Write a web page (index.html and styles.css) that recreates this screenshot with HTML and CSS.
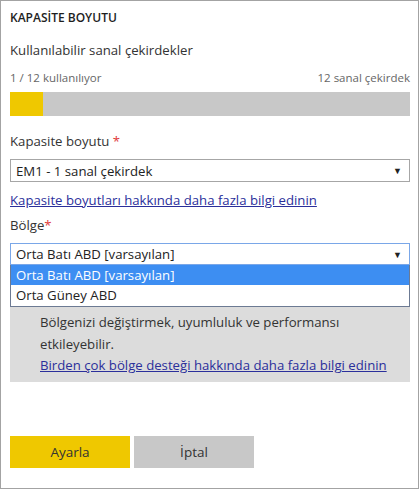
FILE: index.html
```html
<!DOCTYPE html>
<html lang="tr">
<head>
<meta charset="utf-8">
<link rel="stylesheet" href="styles.css">
</head>
<body>
<div class="panel">
  <h2 class="title">KAPASİTE BOYUTU</h2>
  <div class="subhead">Kullanılabilir sanal çekirdekler</div>
  <div class="usage">
    <span>1 / 12 kullanılıyor</span>
    <span>12 sanal çekirdek</span>
  </div>
  <div class="bar"><div class="bar-fill" style="width:33px"></div></div>

  <div class="label">Kapasite boyutu <span class="req">*</span></div>
  <div class="select">
    <span>EM1 - 1 sanal çekirdek</span>
    <span class="arrow">▼</span>
  </div>
  <a class="link first-link" href="#">Kapasite boyutları hakkında daha fazla bilgi edinin</a>

  <div class="label region-label">Bölge<span class="req">*</span></div>
  <div class="region-wrap">
    <div class="select select-open">
      <span>Orta Batı ABD [varsayılan]</span>
      <span class="arrow">▼</span>
    </div>
    <ul class="options">
      <li class="opt active">Orta Batı ABD [varsayılan]</li>
      <li class="opt">Orta Güney ABD</li>
    </ul>
    <div class="note">
      <p>Bölgenizi değiştirmek, uyumluluk ve performansı etkileyebilir.</p>
      <a class="link" href="#">Birden çok bölge desteği hakkında daha fazla bilgi edinin</a>
    </div>
  </div>

  <div class="buttons">
    <button class="btn btn-primary">Ayarla</button>
    <button class="btn btn-secondary">İptal</button>
  </div>
</div>
</body>
</html>
```

FILE: styles.css
```css
* { box-sizing: border-box; }
html, body { margin: 0; padding: 0; background: #fff; }
body {
  font-family: "Open Sans", "Noto Sans", sans-serif;
  color: #252525;
}
.panel {
  width: 419px;
  height: 489px;
  border: 1px solid #a3a3a3;
  padding: 0 8px 0 9px;
  display: flex;
  flex-direction: column;
}
.title {
  margin: 9px 0 0;
  font-size: 12px;
  font-weight: 600;
  line-height: 16px;
  color: #1e1e1e;
}
.subhead {
  margin-top: 14px;
  font-size: 13.2px;
  line-height: 20px;
  color: #333;
}
.usage {
  margin-top: 10px;
  display: flex;
  justify-content: space-between;
  font-size: 11.5px;
  line-height: 16px;
  color: #666;
}
.bar {
  margin-top: 6px;
  height: 24px;
  background: #c8c8c8;
}
.bar-fill {
  height: 100%;
  background: #efc800;
}
.label {
  margin-top: 15px;
  font-size: 13.2px;
  line-height: 20px;
  color: #333;
}
.req { color: #e03a3a; }
.select {
  margin-top: 8px;
  height: 23px;
  border: 1px solid #a6a6a6;
  display: flex;
  align-items: center;
  justify-content: space-between;
  padding: 0 7px 0 5px;
  font-size: 13.2px;
  color: #222;
  background: #fff;
}
.arrow { font-size: 9px; color: #222; }
.link {
  display: block;
  color: #2b2f9b;
  text-decoration: underline;
  font-size: 13.2px;
  line-height: 20px;
}
.first-link { margin-top: 8px; }
.region-label { margin-top: 5px; }
.region-wrap { position: relative; }
.select-open {
  margin-top: 8px;
  height: 22px;
  border-color: #7aa7e8;
}
.options {
  position: absolute;
  top: 30px;
  left: 0;
  right: 0;
  margin: 0;
  padding: 0;
  list-style: none;
  border: 1px solid #6c7a93;
  border-top: none;
  background: #fff;
  z-index: 2;
}
.opt {
  height: 20px;
  line-height: 20px;
  padding: 0 5px;
  font-size: 13.2px;
  color: #222;
}
.opt.active { background: #3d8ef2; color: #fff; }
.opt + .opt { height: 21px; }
.note {
  margin-top: 15px;
  background: #dcdcdc;
  padding: 31px 10px 7px 30px;
  font-size: 13.2px;
  line-height: 22px;
  color: #333;
}
.note p { margin: 0; }
.note .link { line-height: 20px; }
.buttons {
  margin-top: auto;
  margin-bottom: 20px;
  display: flex;
  gap: 4px;
}
.btn {
  width: 120px;
  height: 32px;
  border: none;
  font-family: inherit;
  font-size: 13.5px;
  color: #333;
  padding: 0;
}
.btn-primary { background: #efc800; }
.btn-secondary { background: #c8c8c8; }
```
